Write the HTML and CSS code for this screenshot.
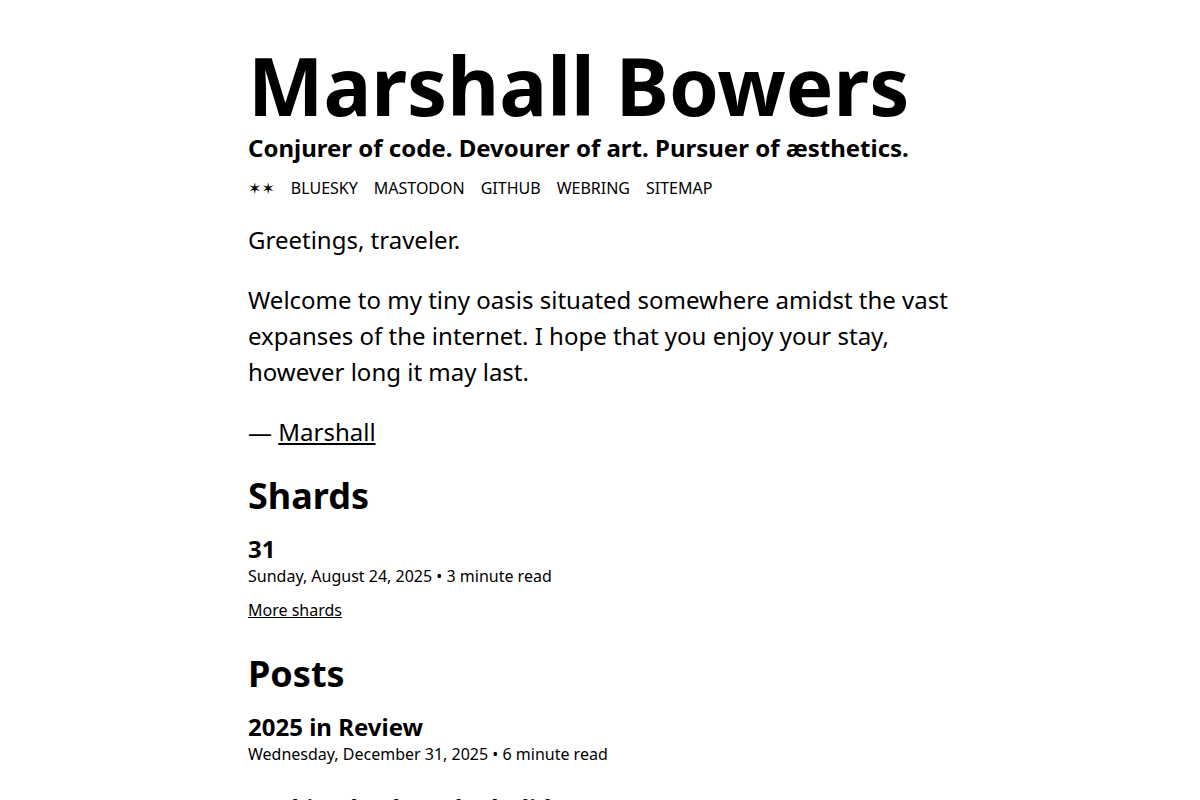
FILE: index.html
```html
<!DOCTYPE html>
<html lang="en">
<head>
<meta charset="utf-8">
<title>Marshall Bowers</title>
<link rel="stylesheet" href="styles.css">
</head>
<body>
<main class="page">
  <header class="site-header">
    <h1 class="site-title">Marshall Bowers</h1>
    <p class="tagline">Conjurer of code. Devourer of art. Pursuer of æsthetics.</p>
    <nav class="nav">
      <a class="nav-link nav-home" href="#">✶✶</a>
      <a class="nav-link" href="#">Bluesky</a>
      <a class="nav-link" href="#">Mastodon</a>
      <a class="nav-link" href="#">GitHub</a>
      <a class="nav-link" href="#">Webring</a>
      <a class="nav-link" href="#">Sitemap</a>
    </nav>
  </header>

  <section class="intro">
    <p>Greetings, traveler.</p>
    <p>Welcome to my tiny oasis situated somewhere amidst the vast expanses of the internet. I hope that you enjoy your stay, however long it may last.</p>
    <p>— <a class="signature" href="#">Marshall</a></p>
  </section>

  <section class="listing">
    <h2 class="section-title">Shards</h2>
    <article class="entry">
      <h3 class="entry-title"><a href="#">31</a></h3>
      <div class="entry-meta">Sunday, August 24, 2025 • 3 minute read</div>
    </article>
    <p class="more"><a href="#">More shards</a></p>
  </section>

  <section class="listing">
    <h2 class="section-title">Posts</h2>
    <article class="entry">
      <h3 class="entry-title"><a href="#">2025 in Review</a></h3>
      <div class="entry-meta">Wednesday, December 31, 2025 • 6 minute read</div>
    </article>
    <article class="entry">
      <h3 class="entry-title"><a href="#">Looking back at the holidays</a></h3>
      <div class="entry-meta">Friday, December 26, 2025 • 4 minute read</div>
    </article>
  </section>
</main>
</body>
</html>
```
FILE: styles.css
```css
html, body {
  margin: 0;
  padding: 0;
  background: #fff;
  color: #000;
}

body {
  font-family: "Noto Sans", "Open Sans", sans-serif;
  font-size: 16px;
  line-height: 1.5;
}

a {
  color: inherit;
}

.page {
  max-width: 704px;
  margin: 0 auto;
  padding-top: 38px;
}

.site-title {
  margin: 0;
  font-size: 80px;
  line-height: 94px;
  font-weight: 700;
}

.tagline {
  margin: 0;
  font-size: 24px;
  line-height: 32px;
  font-weight: 700;
}

.nav {
  display: flex;
  align-items: baseline;
  gap: 16px;
  margin: 12px 0 21px;
  font-size: 16px;
  line-height: 24px;
}

.nav-link {
  text-decoration: none;
  text-transform: uppercase;
}

.nav-home {
  font-family: "DejaVu Sans", sans-serif;
  font-size: 16px;
}

.intro p {
  margin: 0 0 24px;
  font-size: 24px;
  line-height: 36px;
}

.signature {
  text-decoration: underline;
}

.section-title {
  margin: 0 0 15px;
  font-size: 36px;
  line-height: 44px;
  font-weight: 700;
}

.listing + .listing {
  margin-top: 30px;
}

.entry {
  margin-bottom: 28px;
}

.entry:last-of-type {
  margin-bottom: 0;
}

.entry-title {
  margin: 0;
  font-size: 24px;
  line-height: 32px;
  font-weight: 700;
}

.entry-title a {
  text-decoration: none;
}

.entry-meta {
  padding-top: 1px;
  font-size: 16px;
  line-height: 20px;
}

.more {
  margin: 12px 0 0;
  font-size: 16px;
  line-height: 24px;
}
```
